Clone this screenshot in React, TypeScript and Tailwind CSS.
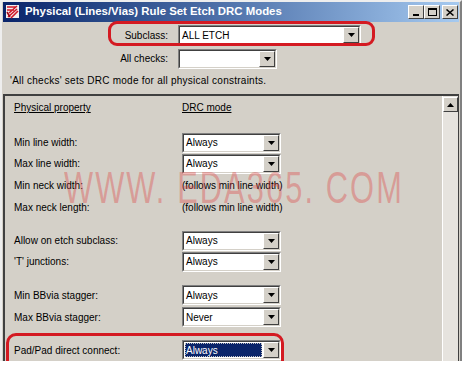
import React from 'react';

const font = { fontFamily: '"Liberation Sans", Arial, sans-serif' };

function Combo({ value, width = 'w-[99px]', selected = false }: { value: string; width?: string; selected?: boolean }) {
  return (
    <div
      className={`${width} h-[20px] flex bg-white border-t border-l border-t-[#808080] border-l-[#808080] border-b border-r border-b-white border-r-white`}
    >
      <div className="flex-1 flex border-t border-l border-t-[#404040] border-l-[#404040] border-b border-r border-b-[#d4d0c8] border-r-[#d4d0c8] min-w-0">
        <div className="flex-1 flex items-center px-[1px] py-[1px] min-w-0">
          {selected ? (
            <div className="h-full flex-1 flex items-center bg-[#0a246a] text-white outline-1 outline-dotted outline-[#c0c0c0] -outline-offset-1 pl-[1px]">
              {value}
            </div>
          ) : (
            <span className="pl-[1px] text-black">{value}</span>
          )}
        </div>
        <DropButton />
      </div>
    </div>
  );
}

function DropButton() {
  return (
    <div className="w-[16px] h-full bg-[#d4d0c8] border-t border-l border-t-white border-l-white border-b border-r border-b-[#404040] border-r-[#404040] flex items-center justify-center">
      <svg width="7" height="4" viewBox="0 0 7 4">
        <path d="M0 0h7L3.5 4z" fill="#000" />
      </svg>
    </div>
  );
}

function TitleButton({ children, ml = '' }: { children: React.ReactNode; ml?: string }) {
  return (
    <div className={`${ml} w-[16px] h-[14px] bg-[#d4d0c8] border-t border-l border-t-white border-l-white border-b border-r border-b-[#404040] border-r-[#404040] flex items-center justify-center`}>
      {children}
    </div>
  );
}

function Row({ label, h, mt = '', children }: { label: string; h: string; mt?: string; children?: React.ReactNode }) {
  return (
    <div className={`${h} ${mt} flex items-start`}>
      <div className="w-[177px] pl-[9px] h-[20px] flex items-center">{label}</div>
      {children}
    </div>
  );
}

export default function App() {
  return (
    <div className="w-[462px] h-[373px] bg-white relative overflow-hidden text-[10px] text-black" style={font}>
      <div className="h-[361px] bg-[#d4d0c8] border-t-2 border-l-2 border-r-2 border-t-[#eeeeee] border-l-[#eeeeee] border-r-[#808080] flex flex-col">
        {/* title bar */}
        <div className="h-[20px] mx-[1px] flex items-center bg-gradient-to-r from-[#0a246a] to-[#a6caf0]">
          <svg width="16" height="16" viewBox="0 0 16 16" className="ml-[2px] mr-[4px]">
            <rect x="1" y="1" width="13" height="13" fill="#f4f0f0" />
            <path d="M2 3h9M2 6h7M4 9l8-7M3 13l9-8M6 14l7-7" stroke="#d01828" strokeWidth="1.6" />
            <path d="M2 8l3 5" stroke="#a00010" strokeWidth="1.5" />
          </svg>
          <span className="text-white font-bold text-[11.4px]">Physical (Lines/Vias) Rule Set Etch DRC Modes</span>
          <div className="ml-auto mr-[1px] flex">
            <TitleButton>
              <div className="w-[6px] h-[2px] bg-black mt-[6px] -ml-[1px]" />
            </TitleButton>
            <TitleButton>
              <div className="w-[9px] h-[8px] border border-black border-t-2" />
            </TitleButton>
            <TitleButton ml="ml-[2px]">
              <svg width="8" height="7" viewBox="0 0 8 7">
                <path d="M0.5 0.5l7 6M7.5 0.5l-7 6" stroke="#000" strokeWidth="1.5" />
              </svg>
            </TitleButton>
          </div>
        </div>

        {/* subclass */}
        <div className="relative mt-[3px] h-[20px] flex items-center">
          <div className="w-[176px] pr-[10px] text-right">Subclass:</div>
          <Combo value="ALL ETCH" width="w-[183px]" />
          <div className="absolute left-[106px] top-[-4px] w-[267px] h-[25px] border-[3px] border-[#d41a22] rounded-[9px]" />
        </div>
        <div className="mt-[4px] h-[19px] flex items-center">
          <div className="w-[176px] pr-[10px] text-right">All checks:</div>
          <Combo value="" width="w-[99px]" />
        </div>
        <div className="mt-[5px] pl-[8px] h-[14px] flex items-center tracking-[0.25px]">'All checks' sets DRC mode for all physical constraints.</div>

        {/* panel */}
        <div className="mt-[7px] mx-[1px] flex-1 flex border-t-2 border-l-2 border-t-[#404040] border-l-[#404040] border-r border-r-[#404040] relative overflow-hidden">
          <div className="flex-1 flex flex-col pt-[4px]">
            <div className="h-[16px] flex items-center">
              <div className="w-[177px] pl-[9px] underline">Physical property</div>
              <div className="underline">DRC mode</div>
            </div>
            <Row label="Min line width:" h="h-[21px]" mt="mt-[17px]"><Combo value="Always" /></Row>
            <Row label="Max line width:" h="h-[21px]"><Combo value="Always" /></Row>
            <Row label="Min neck width:" h="h-[22px]" mt="mt-[1px]"><div className="h-[20px] flex items-center">(follows min line width)</div></Row>
            <Row label="Max neck length:" h="h-[22px]"><div className="h-[20px] flex items-center">(follows min line width)</div></Row>
            <Row label="Allow on etch subclass:" h="h-[21px]" mt="mt-[12px]"><Combo value="Always" /></Row>
            <Row label="'T' junctions:" h="h-[21px]"><Combo value="Always" /></Row>
            <Row label="Min BBvia stagger:" h="h-[22px]" mt="mt-[13px]"><Combo value="Always" /></Row>
            <Row label="Max BBvia stagger:" h="h-[22px]"><Combo value="Never" /></Row>
            <div className="relative">
              <Row label="Pad/Pad direct connect:" h="h-[21px]" mt="mt-[11px]"><Combo value="Always" selected /></Row>
              <div className="absolute left-[1px] top-[4px] w-[278px] h-[40px] border-[3px] border-[#d41a22] rounded-[10px]" />
            </div>
          </div>
          {/* scrollbar */}
          <div className="w-[16px] flex flex-col bg-[#e6e3de] border-l border-l-white">
            <div className="mt-[1px] h-[15px] bg-[#d4d0c8] border-t border-l border-t-white border-l-white border-b border-r border-b-[#404040] border-r-[#404040] flex items-center justify-center">
              <svg width="7" height="4" viewBox="0 0 7 4">
                <path d="M3.5 0L7 4H0z" fill="#000" />
              </svg>
            </div>
          </div>
        </div>
      </div>

      {/* watermark */}
      <div className="absolute left-[64px] top-[166px] pointer-events-none text-[rgba(220,70,70,0.38)] text-[44px] leading-none tracking-[3px] whitespace-nowrap origin-left scale-x-[0.7]">
        WWW. EDA365. COM
      </div>
    </div>
  );
}
